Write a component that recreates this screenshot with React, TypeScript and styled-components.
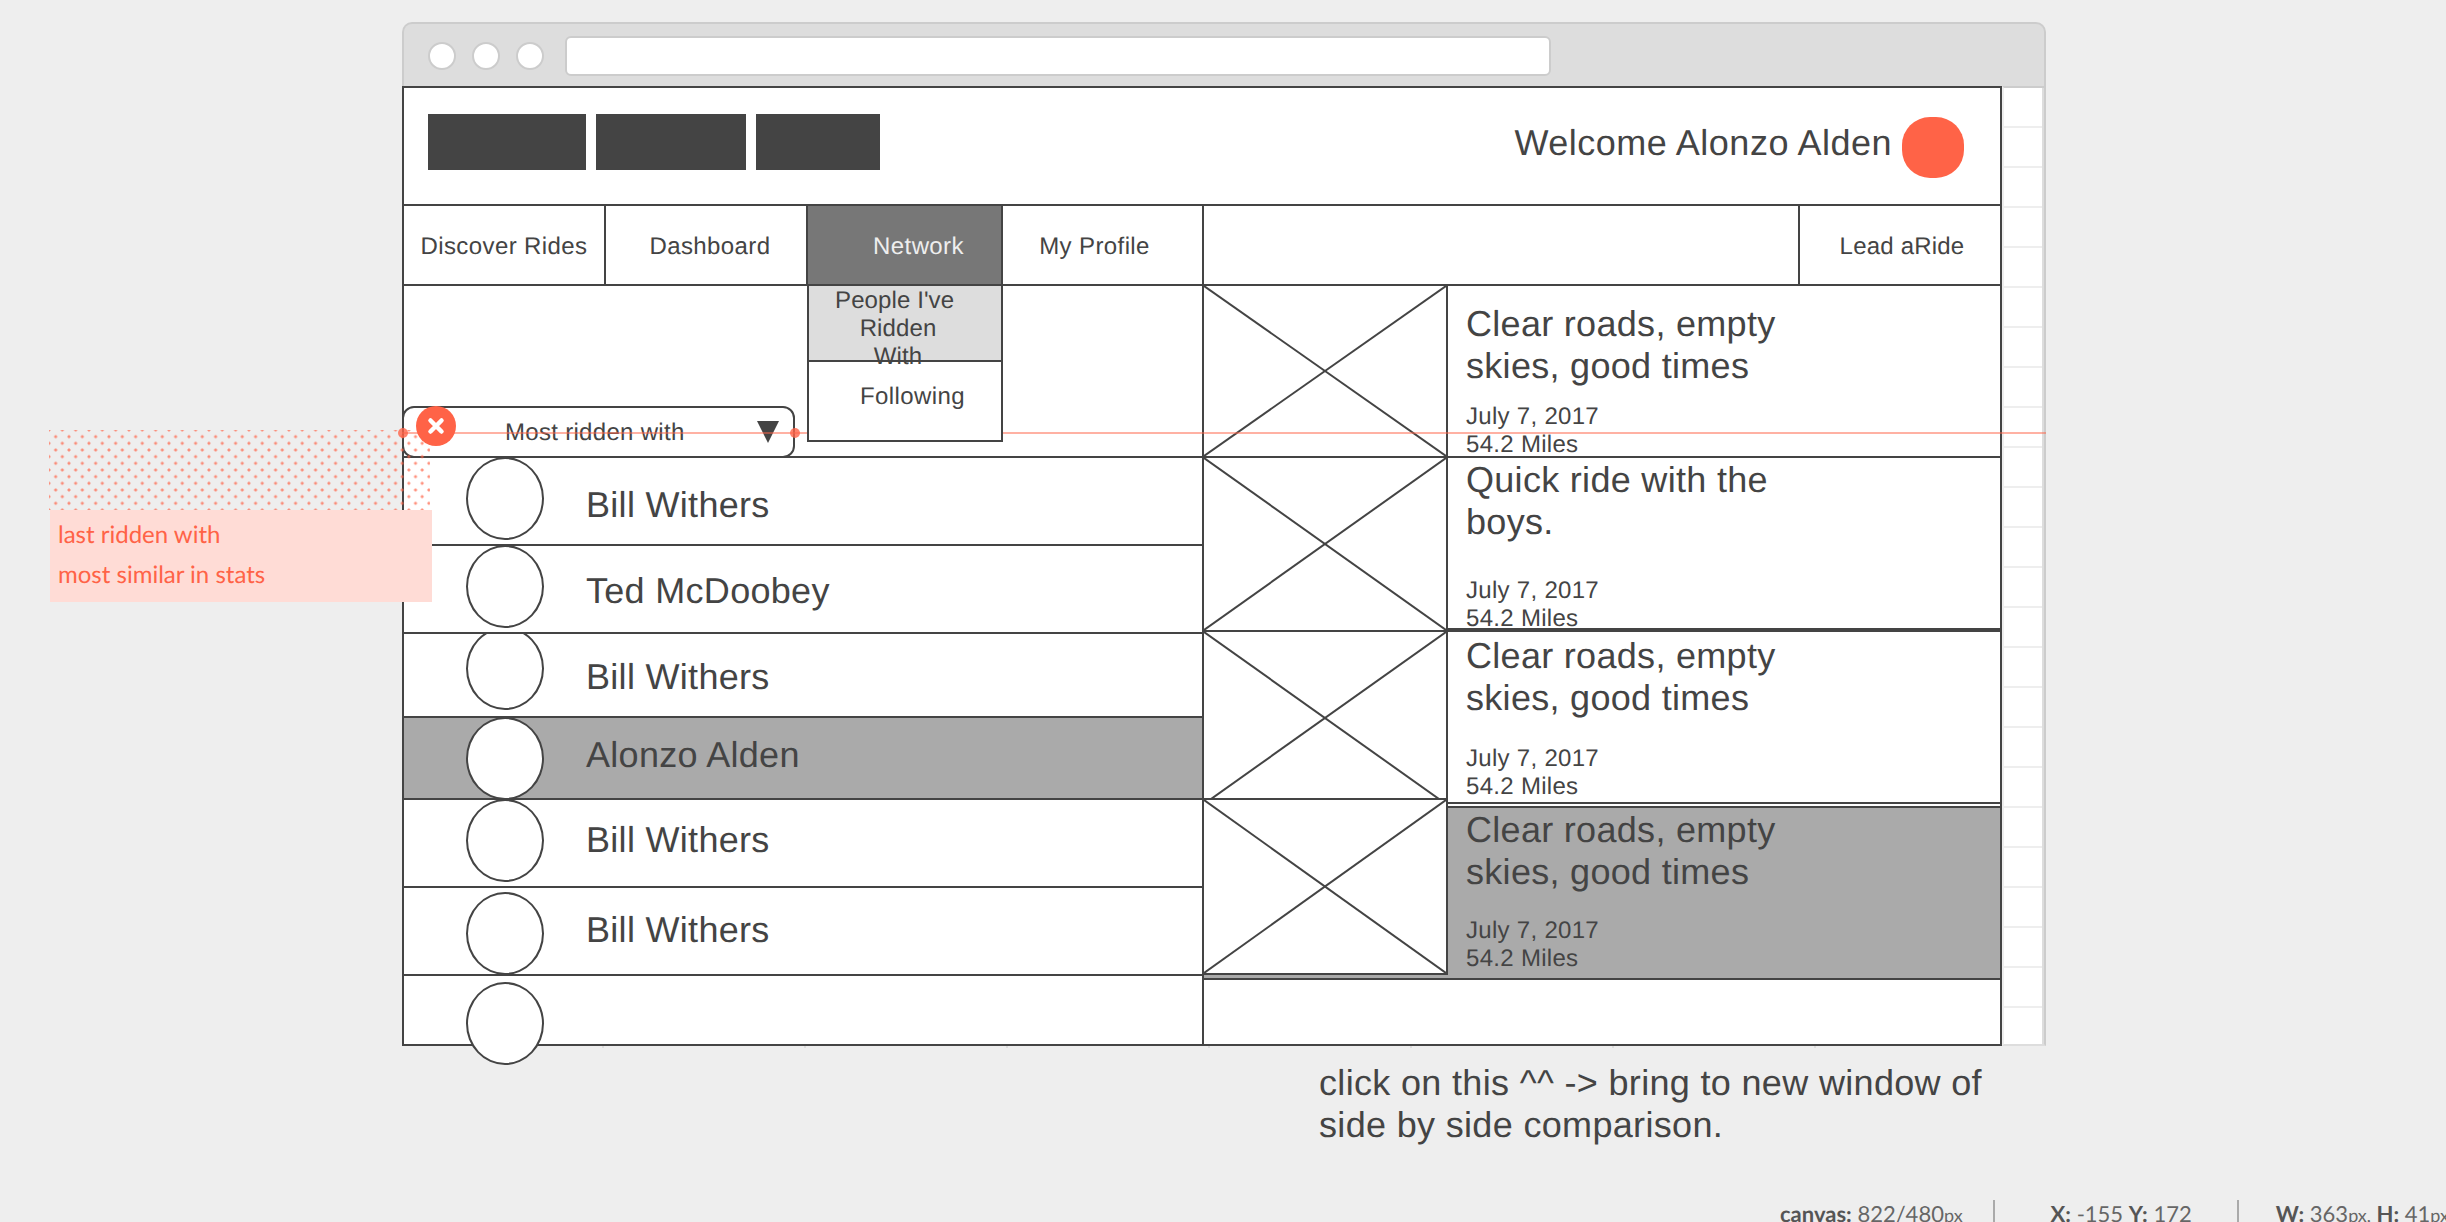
import React from "react";
import styled, { createGlobalStyle } from "styled-components";

const INK = "#444444";
const TOMATO = "#ff6347";
const SELECTED = "#aaaaaa";

const GlobalStyle = createGlobalStyle`
  html, body {
    margin: 0;
    padding: 0;
    background: #eeeeee;
  }
  * {
    box-sizing: border-box;
  }
`;

type Person = { name: string; height: number; top: number; nudge: number; selected?: boolean; clip?: boolean };
type Ride = {
  title: [string, string];
  height: number;
  pad: number;
  gap: number;
  lineWidth: number;
  selected?: boolean;
  offset?: number;
};
type Frame = { height: number; drawn: number };

const people: Person[] = [
  { name: "Bill Withers", height: 88, top: -1, nudge: 4 },
  { name: "Ted McDoobey", height: 88, top: -1, nudge: 2 },
  { name: "Bill Withers", height: 84, top: -7, nudge: 2, clip: true },
  { name: "Alonzo Alden", height: 82, top: -1, nudge: -3, selected: true },
  { name: "Bill Withers", height: 88, top: -1, nudge: -3 },
  { name: "Bill Withers", height: 88, top: 4, nudge: -1 },
];

const thumbs: Frame[] = [
  { height: 172, drawn: 170 },
  { height: 174, drawn: 172 },
  { height: 168, drawn: 172 },
  { height: 175, drawn: 173 },
];

const rides: Ride[] = [
  { title: ["Clear roads, empty", "skies, good times"], height: 172, pad: 17, gap: 16, lineWidth: 2 },
  { title: ["Quick ride with the", "boys."], height: 174, pad: 1, gap: 34, lineWidth: 4 },
  { title: ["Clear roads, empty", "skies, good times"], height: 172, pad: 3, gap: 26, lineWidth: 2 },
  { title: ["Clear roads, empty", "skies, good times"], height: 174, pad: 1, gap: 24, lineWidth: 2, selected: true, offset: 2 },
];

function App(): JSX.Element {
  return (
    <Page>
      <GlobalStyle />
      <BrowserFrame>
        <ChromeBar>
          <ChromeDot />
          <ChromeDot />
          <ChromeDot />
          <UrlBar />
        </ChromeBar>
        <Viewport>
          <Canvas>
            <Header>
              <Logos>
                <LogoBlock $width={158} />
                <LogoBlock $width={150} />
                <LogoBlock $width={124} />
              </Logos>
              <Welcome>Welcome Alonzo Alden</Welcome>
              <UserBlob />
            </Header>
            <NavBar>
              <NavItem $width={202}>Discover Rides</NavItem>
              <NavItem $width={202} $shift={8}>
                Dashboard
              </NavItem>
              <NavItem $width={195} $active $shift={28}>
                Network
                <SubMenu>
                  <SubMenuPeople>
                    People I've&nbsp;
                    <br />
                    Ridden
                    <br />
                    With
                  </SubMenuPeople>
                  <SubMenuFollowing>Following</SubMenuFollowing>
                </SubMenu>
              </NavItem>
              <NavItem $width={201} $shift={-16}>
                My Profile
              </NavItem>
              <NavSpacer />
              <LeadItem>Lead aRide</LeadItem>
            </NavBar>
            <Columns>
              <PeopleColumn>
                <SortArea>
                  <SortSelect>
                    <SortLabel>Most ridden with</SortLabel>
                    <svg width="22" height="22" viewBox="0 0 22 22">
                      <polygon points="0,0 22,0 11,22" fill={INK} />
                    </svg>
                  </SortSelect>
                </SortArea>
                {people.map((p, i) => (
                  <PersonRow key={i} $height={p.height} $selected={p.selected} $clip={p.clip}>
                    <Avatar $top={p.top} />
                    <PersonName $nudge={p.nudge}>{p.name}</PersonName>
                  </PersonRow>
                ))}
                <LastRow>
                  <Avatar $top={6} />
                </LastRow>
              </PeopleColumn>
              <RidesColumn>
                <ThumbColumn>
                  {thumbs.map((t, i) => (
                    <Thumb key={i} $height={t.height}>
                      <svg width="242" height={t.drawn} viewBox={`0 0 242 ${t.drawn}`}>
                        <line x1="0" y1="0" x2="242" y2={t.drawn} stroke={INK} strokeWidth="2" />
                        <line x1="242" y1="0" x2="0" y2={t.drawn} stroke={INK} strokeWidth="2" />
                      </svg>
                    </Thumb>
                  ))}
                  <ThumbFooter />
                </ThumbColumn>
                <BodyColumn>
                  {rides.map((r, i) => (
                    <RideBody
                      key={i}
                      $height={r.height}
                      $pad={r.pad}
                      $lineWidth={r.lineWidth}
                      $selected={r.selected}
                      $offset={r.offset}
                    >
                      <RideTitle>
                        {r.title[0]}
                        <br />
                        {r.title[1]}
                      </RideTitle>
                      <RideMeta $gap={r.gap}>
                        July 7, 2017
                        <br />
                        54.2 Miles
                      </RideMeta>
                    </RideBody>
                  ))}
                </BodyColumn>
              </RidesColumn>
            </Columns>
          </Canvas>
          <Gutter />
        </Viewport>
        <TickStrip />
      </BrowserFrame>
      <Note>
        click on this ^^ -&gt; bring to new window of
        <br />
        side by side comparison.
      </Note>
      <StatusBar>
        <StatusCell $pad={30} $margin={56}>
          <b>canvas:</b> 822/480<small>px</small>
        </StatusCell>
        <StatusCell $pad={45} $margin={37}>
          <b>X:</b> -155 <b>Y:</b> 172
        </StatusCell>
        <StatusCell $pad={0} $margin={0} $last>
          <b>W:</b> 363<small>px,</small> <b>H:</b> 41<small>px</small>
        </StatusCell>
      </StatusBar>

      <DotField />
      <AnnotationLabel>
        <div>last ridden with</div>
        <div>most similar in stats</div>
      </AnnotationLabel>
      <GuideLine />
      <GuideHandle $x={398} />
      <GuideHandle $x={790} />
      <CloseBadge>
        <svg width="18" height="18" viewBox="0 0 18 18">
          <path d="M3.5 3.5 L14.5 14.5 M14.5 3.5 L3.5 14.5" stroke="#fff" strokeWidth="4.5" strokeLinecap="round" />
        </svg>
      </CloseBadge>
    </Page>
  );
}

const Page = styled.div`
  position: relative;
  width: 2446px;
  height: 1222px;
  overflow: hidden;
  padding: 22px 0 0 402px;
  background: #eeeeee;
  color: ${INK};
  font-family: "Liberation Sans", Arial, sans-serif;
  text-rendering: geometricPrecision;
`;

const BrowserFrame = styled.div`
  width: 1644px;
`;

const ChromeBar = styled.div`
  height: 64px;
  display: flex;
  align-items: center;
  gap: 16px;
  padding: 2px 0 0 24px;
  background: #dddddd;
  border: 2px solid #cccccc;
  border-bottom: 0;
  border-radius: 10px 10px 0 0;
`;

const ChromeDot = styled.div`
  width: 28px;
  height: 28px;
  border-radius: 50%;
  background: #ffffff;
  border: 2px solid #cccccc;
`;

const UrlBar = styled.div`
  width: 986px;
  height: 40px;
  margin-left: 5px;
  background: #ffffff;
  border: 2px solid #cccccc;
  border-radius: 6px;
`;

const Viewport = styled.div`
  display: flex;
  height: 960px;
`;

const Canvas = styled.div`
  width: 1600px;
  display: flex;
  flex-direction: column;
  background: #ffffff;
  border: 2px solid ${INK};
`;

const Gutter = styled.div`
  width: 44px;
  background: repeating-linear-gradient(
    to bottom,
    #ffffff 0,
    #ffffff 38px,
    #eeeeee 38px,
    #eeeeee 40px
  );
  border-top: 2px solid #cccccc;
  border-left: 2px solid #eeeeee;
  border-right: 2px solid #cccccc;
  border-bottom: 2px solid #dddddd;
  box-shadow: inset -2px 0 0 #dddddd;
`;

const TickStrip = styled.div`
  width: 1600px;
  height: 2px;
  background: repeating-linear-gradient(
    to right,
    transparent 0,
    transparent 200px,
    #dddddd 200px,
    #dddddd 202px
  );
`;

const Header = styled.header`
  height: 118px;
  flex-shrink: 0;
  display: flex;
  align-items: flex-start;
  padding: 26px 36px 0 24px;
  border-bottom: 2px solid ${INK};
`;

const Logos = styled.div`
  display: flex;
  gap: 10px;
  margin-right: auto;
`;

const LogoBlock = styled.div<{ $width: number }>`
  width: ${(p) => p.$width}px;
  height: 56px;
  background: #444444;
`;

const Welcome = styled.div`
  font-size: 36px;
  line-height: 42px;
  letter-spacing: 0.5px;
  margin-top: 8px;
  margin-right: 10px;
`;

const UserBlob = styled.div`
  width: 62px;
  height: 61px;
  margin-top: 3px;
  background: ${TOMATO};
  border-radius: 28px;
`;

const NavBar = styled.nav`
  height: 80px;
  flex-shrink: 0;
  display: flex;
  border-bottom: 2px solid ${INK};
`;

const NavItem = styled.div<{ $width: number; $active?: boolean; $shift?: number }>`
  position: relative;
  width: ${(p) => p.$width}px;
  display: flex;
  align-items: center;
  justify-content: center;
  padding-top: 3px;
  padding-left: ${(p) => Math.max(p.$shift ?? 0, 0)}px;
  padding-right: ${(p) => Math.max(-(p.$shift ?? 0), 0)}px;
  font-size: 24px;
  letter-spacing: 0.4px;
  background: ${(p) => (p.$active ? "#777777" : "transparent")};
  color: ${(p) => (p.$active ? "#eeeeee" : INK)};
  border-right: 2px solid ${INK};
`;

const NavSpacer = styled.div`
  flex: 1;
`;

const LeadItem = styled.div`
  width: 202px;
  display: flex;
  align-items: center;
  justify-content: center;
  padding-top: 3px;
  padding-left: 4px;
  font-size: 24px;
  letter-spacing: 0.2px;
  border-left: 2px solid ${INK};
`;

const SubMenu = styled.div`
  position: absolute;
  z-index: 2;
  top: 78px;
  left: -1px;
  width: 196px;
  height: 158px;
  color: ${INK};
  background: #ffffff;
  border: 2px solid ${INK};
`;

const SubMenuPeople = styled.div`
  height: 76px;
  padding: 1px 14px 0 0;
  font-size: 24px;
  line-height: 28px;
  letter-spacing: 0.1px;
  text-align: center;
  background: #dddddd;
  border-bottom: 2px solid ${INK};
`;

const SubMenuFollowing = styled.div`
  padding: 21px 0 0 51px;
  font-size: 24px;
  line-height: 28px;
  letter-spacing: 0.4px;
`;

const Columns = styled.div`
  flex: 1;
  display: flex;
  min-height: 0;
`;

const PeopleColumn = styled.section`
  width: 800px;
  flex-shrink: 0;
  display: flex;
  flex-direction: column;
  border-right: 2px solid ${INK};
`;

const SortArea = styled.div`
  height: 172px;
  flex-shrink: 0;
  display: flex;
  align-items: flex-end;
  border-bottom: 2px solid ${INK};
`;

const SortSelect = styled.div`
  width: 393px;
  height: 52px;
  flex-shrink: 0;
  display: flex;
  align-items: center;
  margin: 0 0 -2px -2px;
  padding: 0 14px 0 101px;
  border: 2px solid ${INK};
  border-radius: 12px;
  background: #ffffff;
`;

const SortLabel = styled.span`
  margin: 2px auto 0 0;
  font-size: 24px;
  letter-spacing: 0.3px;
  white-space: nowrap;
`;

const PersonRow = styled.div<{ $height: number; $selected?: boolean; $clip?: boolean }>`
  height: ${(p) => p.$height}px;
  flex-shrink: 0;
  display: flex;
  align-items: flex-start;
  background: ${(p) => (p.$selected ? SELECTED : "transparent")};
  border-bottom: 2px solid ${INK};
  overflow: ${(p) => (p.$clip ? "hidden" : "visible")};
`;

const LastRow = styled.div`
  flex: 1;
  display: flex;
  align-items: flex-start;
`;

const Avatar = styled.div<{ $top: number }>`
  width: 78px;
  height: 83px;
  flex-shrink: 0;
  margin: ${(p) => p.$top}px 0 0 62px;
  background: #ffffff;
  border: 2px solid ${INK};
  border-radius: 50%;
`;

const PersonName = styled.div<{ $nudge: number }>`
  align-self: center;
  margin-top: ${(p) => p.$nudge * 2}px;
  margin-left: 42px;
  font-size: 36px;
  line-height: 42px;
  letter-spacing: 0.3px;
`;

const RidesColumn = styled.section`
  flex: 1;
  display: flex;
`;

const ThumbColumn = styled.div`
  width: 244px;
  height: 694px;
  flex-shrink: 0;
  display: flex;
  flex-direction: column;
`;

const Thumb = styled.div<{ $height: number }>`
  height: ${(p) => p.$height}px;
  flex-shrink: 0;
  overflow: hidden;
  background: #ffffff;
  border-right: 2px solid ${INK};
  border-bottom: 2px solid ${INK};

  svg {
    display: block;
  }
`;

const ThumbFooter = styled.div`
  flex: 1;
  background: ${SELECTED};
  border-bottom: 2px solid ${INK};
`;

const BodyColumn = styled.div`
  flex: 1;
  display: flex;
  flex-direction: column;
`;

const RideBody = styled.article<{
  $height: number;
  $pad: number;
  $lineWidth: number;
  $selected?: boolean;
  $offset?: number;
}>`
  height: ${(p) => p.$height}px;
  flex-shrink: 0;
  margin-top: ${(p) => p.$offset ?? 0}px;
  padding: ${(p) => p.$pad}px 0 0 18px;
  background: ${(p) => (p.$selected ? SELECTED : "transparent")};
  border-top: ${(p) => (p.$selected ? `2px solid ${INK}` : "0")};
  border-bottom: ${(p) => p.$lineWidth}px solid ${INK};
`;

const RideTitle = styled.div`
  font-size: 36px;
  line-height: 42px;
  letter-spacing: 0.3px;
`;

const RideMeta = styled.div<{ $gap: number }>`
  margin-top: ${(p) => p.$gap}px;
  font-size: 24px;
  line-height: 28px;
  letter-spacing: 0.3px;
`;

const Note = styled.div`
  margin: 14px 0 0 917px;
  font-size: 36px;
  line-height: 42px;
  letter-spacing: 0.33px;
`;

const StatusBar = styled.div`
  position: absolute;
  top: 1200px;
  left: 1780px;
  display: flex;
  white-space: nowrap;
  font-family: Lato, sans-serif;
  font-size: 22px;
  line-height: 28px;
  color: #666666;

  b {
    color: #555555;
  }

  small {
    font-size: 18px;
  }
`;

const StatusCell = styled.div<{ $pad: number; $margin: number; $last?: boolean }>`
  padding-right: ${(p) => p.$pad}px;
  margin-right: ${(p) => p.$margin}px;
  border-right: ${(p) => (p.$last ? "0" : "2px solid #aaaaaa")};
`;

const DotField = styled.div`
  position: absolute;
  top: 430px;
  left: 49px;
  width: 381px;
  height: 80px;
  background-image: radial-gradient(circle, rgba(255, 99, 71, 0.7) 1.3px, transparent 1.7px),
    radial-gradient(circle, rgba(255, 99, 71, 0.7) 1.3px, transparent 1.7px);
  background-size: 13.33px 13.33px;
  background-position: 0 0, 6.67px 6.67px;
`;

const AnnotationLabel = styled.div`
  position: absolute;
  top: 510px;
  left: 50px;
  width: 382px;
  height: 92px;
  padding: 5px 0 0 8px;
  background: #ffdcd6;
  color: ${TOMATO};
  font-family: Lato, sans-serif;
  font-size: 24px;
  line-height: 40px;
`;

const GuideLine = styled.div`
  position: absolute;
  top: 432px;
  left: 402px;
  width: 1644px;
  height: 2px;
  background: rgba(255, 99, 71, 0.5);
`;

const GuideHandle = styled.div<{ $x: number }>`
  position: absolute;
  top: 428px;
  left: ${(p) => p.$x}px;
  width: 10px;
  height: 10px;
  border-radius: 50%;
  background: rgba(255, 99, 71, 0.8);
`;

const CloseBadge = styled.div`
  position: absolute;
  top: 406px;
  left: 416px;
  width: 40px;
  height: 40px;
  display: flex;
  align-items: center;
  justify-content: center;
  border-radius: 50%;
  background: ${TOMATO};
`;

export default App;
